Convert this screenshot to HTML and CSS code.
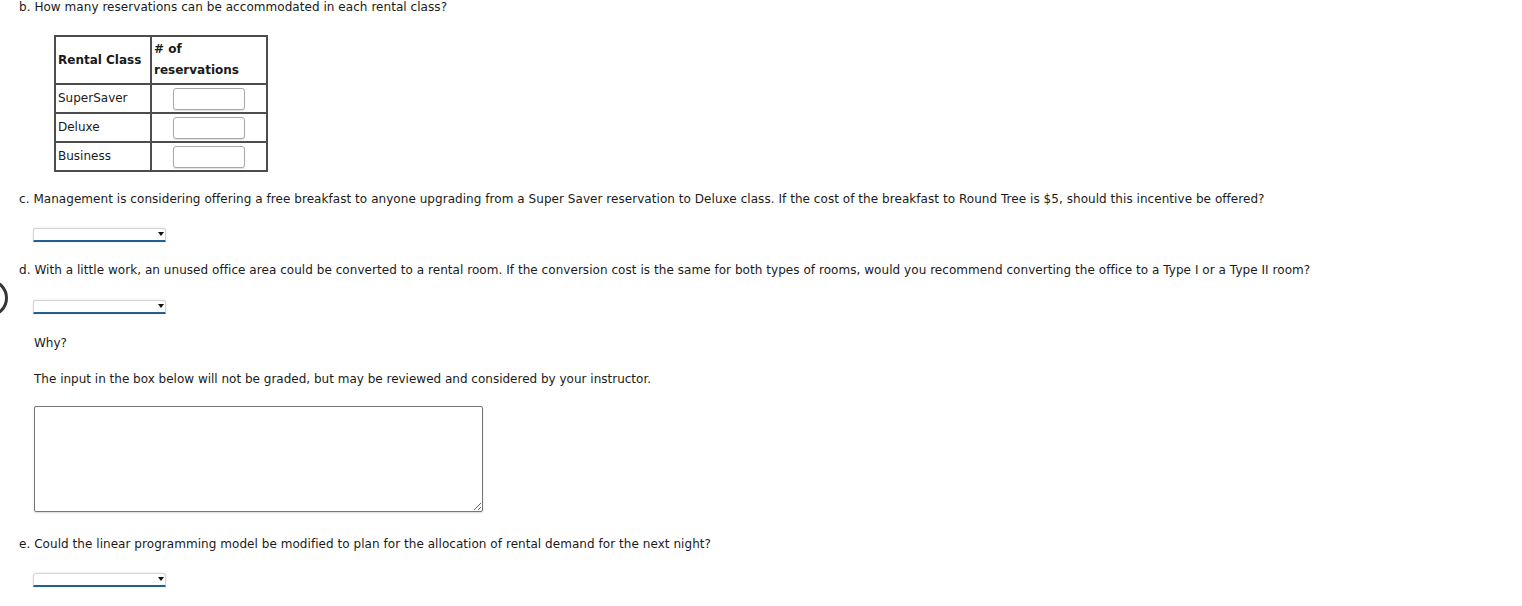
FILE: index.html
```html
<!DOCTYPE html>
<html lang="en">
<head>
<meta charset="utf-8">
<title>Rental Class Questions</title>
<link rel="stylesheet" href="styles.css">
</head>
<body>
<div class="edge-button" aria-hidden="true"></div>
<main class="page">
  <p class="q q-b">b. How many reservations can be accommodated in each rental class?</p>
  <table class="rental">
    <thead>
      <tr>
        <th class="col-class">Rental Class</th>
        <th class="col-res"># of<br>reservations</th>
      </tr>
    </thead>
    <tbody>
      <tr><td>SuperSaver</td><td class="cell-input"><input class="num" type="text"></td></tr>
      <tr><td>Deluxe</td><td class="cell-input"><input class="num" type="text"></td></tr>
      <tr><td>Business</td><td class="cell-input"><input class="num" type="text"></td></tr>
    </tbody>
  </table>

  <p class="q q-c">c. Management is considering offering a free breakfast to anyone upgrading from a Super Saver reservation to Deluxe class. If the cost of the breakfast to Round Tree is $5, should this incentive be offered?</p>
  <div class="dropdown dd-c"><span class="arrow"></span></div>

  <p class="q q-d">d. With a little work, an unused office area could be converted to a rental room. If the conversion cost is the same for both types of rooms, would you recommend converting the office to a Type I or a Type II room?</p>
  <div class="dropdown dd-d"><span class="arrow"></span></div>

  <p class="sub why">Why?</p>
  <p class="sub note">The input in the box below will not be graded, but may be reviewed and considered by your instructor.</p>
  <textarea class="answer"></textarea>

  <p class="q q-e">e. Could the linear programming model be modified to plan for the allocation of rental demand for the next night?</p>
  <div class="dropdown dd-e"><span class="arrow"></span></div>
</main>
</body>
</html>
```

FILE: styles.css
```css
html, body {
  margin: 0;
  padding: 0;
  background: #ffffff;
}

body {
  font-family: "DejaVu Sans", Verdana, sans-serif;
  font-size: 12px;
  line-height: 15px;
  color: #1a1a1a;
  position: relative;
  overflow: hidden;
  height: 606px;
}

.page {
  padding: 0 0 0 19px;
}

.q {
  margin: 0;
  letter-spacing: 0.05px;
}

.q-b {
  margin-bottom: 20px;
}

.rental {
  border-collapse: collapse;
  margin-left: 35px;
  margin-bottom: 20px;
}

.rental th,
.rental td {
  border: 2px solid #4d4d4d;
  padding: 0 2px;
  text-align: left;
  vertical-align: middle;
}

.rental th {
  font-weight: bold;
  height: 46px;
  line-height: 21px;
  padding-top: 0;
}

.col-class {
  width: 90px;
}

.col-res {
  width: 110px;
}

.rental td {
  height: 27px;
  box-sizing: border-box;
}

.rental tbody tr {
  height: 29px;
}

.cell-input {
  text-align: center !important;
}

.num {
  display: block;
  margin: 0 auto;
  box-sizing: border-box;
  width: 72px;
  height: 22px;
  border: 1px solid #a9a9a9;
  border-radius: 3px;
  box-shadow: 0 1px 1px rgba(0, 0, 0, 0.12);
  background: #fff;
  padding: 0;
}

.dropdown {
  position: relative;
  box-sizing: border-box;
  width: 133px;
  height: 14px;
  margin-left: 14px;
  background: #fff;
  border: 1px solid #d4d4d4;
  border-bottom: 2px solid #245f8e;
  border-radius: 3px 3px 0 0;
  box-shadow: 0 0 2px rgba(0, 0, 0, 0.15);
}

.arrow {
  position: absolute;
  right: 1px;
  top: 3px;
  width: 0;
  height: 0;
  border-left: 3px solid transparent;
  border-right: 3px solid transparent;
  border-top: 4px solid #111;
}

.q-c {
  margin-bottom: 21px;
}

.dd-c {
  margin-bottom: 21px;
}

.q-d {
  margin-bottom: 22px;
}

.dd-d {
  margin-bottom: 22px;
}

.sub {
  margin: 0 0 21px 15px;
}

.note {
  margin-bottom: 19px;
}

.answer {
  display: block;
  box-sizing: border-box;
  width: 449px;
  height: 106px;
  margin: 0 0 25px 15px;
  border: 1px solid #767676;
  border-radius: 2px;
  box-shadow: 0 1px 2px rgba(0, 0, 0, 0.15);
  font-family: inherit;
  resize: both;
}

.q-e {
  margin-bottom: 21px;
}

.edge-button {
  position: absolute;
  left: -30px;
  top: 279px;
  width: 38px;
  height: 38px;
  box-sizing: border-box;
  border: 3px solid #363636;
  border-radius: 50%;
}
```
